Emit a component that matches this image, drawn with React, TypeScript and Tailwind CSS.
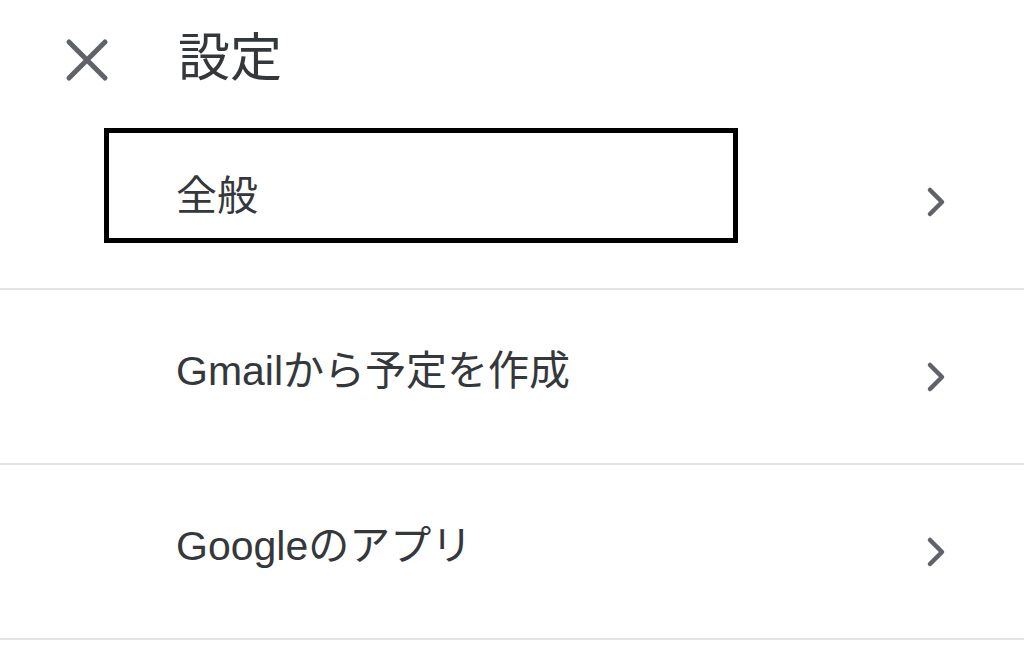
import React from "react";

const Chevron = () => (
  <svg width="24" height="32" viewBox="0 0 24 32" className="shrink-0">
    <path d="M6 4 L18 16 L6 28" fill="none" stroke="#5f6368" strokeWidth="4.5" strokeLinecap="round" strokeLinejoin="round" />
  </svg>
);

const Row = ({ label, boxed }: { label: string; boxed?: boolean }) => (
  <div className="relative flex h-[175px] items-center border-b-2 border-[#e3e3e3] pl-[176px] pr-[76px]">
    {boxed && (
      <div className="absolute left-[104px] top-[13px] h-[115px] w-[634px] border-[5px] border-black" />
    )}
    <span className="mb-[10px] flex-1 text-[41px] leading-none text-[#35383b]">{label}</span>
    <Chevron />
  </div>
);

export default function App() {
  return (
    <div
      className="h-[656px] w-[1024px] overflow-hidden bg-white"
      style={{ fontFamily: '"Liberation Sans", "Noto Sans CJK JP", sans-serif' }}
    >
      <div className="flex h-[115px] items-center">
        <div className="flex w-[178px] justify-center pr-[4px]">
          <svg width="44" height="44" viewBox="0 0 44 44" className="mt-[4px]">
            <path d="M4 4 L40 40 M40 4 L4 40" stroke="#5f6368" strokeWidth="5" strokeLinecap="round" />
          </svg>
        </div>
        <span className="text-[52px] leading-none text-[#35383b]">設定</span>
      </div>
      <Row label="全般" boxed />
      <Row label="Gmailから予定を作成" />
      <Row label="Googleのアプリ" />
    </div>
  );
}
